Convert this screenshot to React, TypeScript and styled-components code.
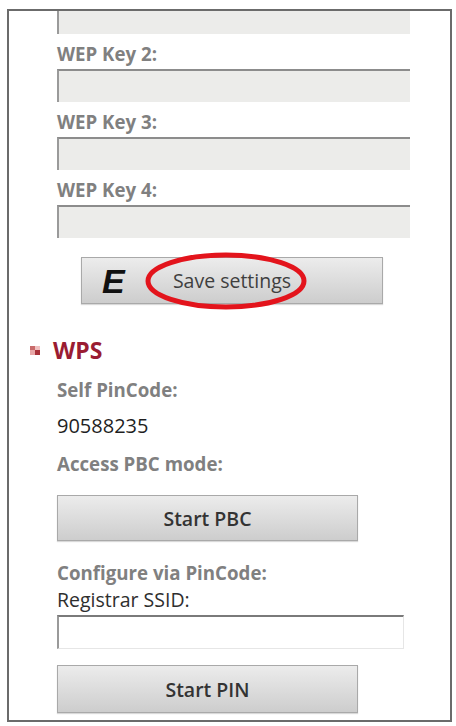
import React from "react";
import styled, { createGlobalStyle } from "styled-components";

const Global = createGlobalStyle`
  html, body { margin: 0; padding: 0; background: #ffffff; }
  body { font-family: "Open Sans", Roboto, "Liberation Sans", Arial, sans-serif; }
`;

const Frame = styled.div`
  box-sizing: border-box;
  margin: 9px 0 0 7px;
  width: 445px;
  height: 713px;
  border: 2px solid #6b6b6b;
  background: #ffffff;
  overflow: hidden;
`;

const Column = styled.div`
  display: flex;
  flex-direction: column;
  align-items: flex-start;
  margin-top: -10px;
  padding-left: 48px;
`;

const Field = styled.div<{ $white?: boolean; $width: number; $mt?: number }>`
  box-sizing: border-box;
  width: ${(p) => p.$width}px;
  height: ${(p) => (p.$white ? 34 : 33)}px;
  margin-top: ${(p) => p.$mt ?? 0}px;
  background: ${(p) => (p.$white ? "#ffffff" : "#ececea")};
  border-top: 2px solid ${(p) => (p.$white ? "#7a7a7a" : "#8c8c8c")};
  border-left: 2px solid #9a9a9a;
  border-right: ${(p) => (p.$white ? "1px solid #e6e6e6" : "none")};
  border-bottom: ${(p) => (p.$white ? "1px solid #e6e6e6" : "none")};
`;

const Label = styled.div<{ $mt: number; $mb?: number; $dark?: boolean }>`
  margin-top: ${(p) => p.$mt}px;
  margin-bottom: ${(p) => p.$mb ?? 0}px;
  font-size: ${(p) => (p.$dark ? 19.5 : 18.7)}px;
  line-height: 22px;
  font-weight: ${(p) => (p.$dark ? 400 : 700)};
  color: ${(p) => (p.$dark ? "#2e2e2e" : "#808080")};
`;

const Value = styled.div`
  margin-top: 13px;
  font-size: 20px;
  line-height: 24px;
  color: #1f1f1f;
`;

const Button = styled.div<{ $width: number; $height: number; $mt: number; $ml?: number }>`
  position: relative;
  box-sizing: border-box;
  width: ${(p) => p.$width}px;
  height: ${(p) => p.$height}px;
  margin-top: ${(p) => p.$mt}px;
  margin-left: ${(p) => p.$ml ?? 0}px;
  display: flex;
  align-items: center;
  justify-content: center;
  border: 1px solid #a9a9a9;
  background: linear-gradient(#ececec, #cdcdcd);
  box-shadow: 0 1px 1px rgba(0, 0, 0, 0.15);
  font-size: 19.5px;
  font-weight: 600;
  color: #333333;
`;

const SaveText = styled.span`
  font-weight: 400;
  color: #3f3f3f;
  font-size: 19.5px;
`;

const Mark = styled.span`
  position: absolute;
  left: 20px;
  top: 6px;
  font-family: "Liberation Sans", Arial, sans-serif;
  font-style: italic;
  font-weight: 700;
  font-size: 34px;
  line-height: 34px;
  color: #111111;
`;

const Ring = styled.svg`
  position: absolute;
  left: 63px;
  top: -6px;
  overflow: visible;
`;

const Heading = styled.div`
  display: flex;
  align-items: center;
  gap: 13px;
  margin-top: 34px;
  margin-left: -27px;
  font-size: 23px;
  line-height: 24px;
  font-weight: 700;
  color: #9a1c32;
`;

const Bullet = () => (
  <svg width="10" height="9" viewBox="0 0 10 9">
    <rect x="0" y="0" width="5" height="4" fill="#c86a6a" />
    <rect x="5" y="0" width="5" height="4" fill="#f0c0c0" />
    <rect x="0" y="4" width="5" height="5" fill="#e8a8a8" />
    <rect x="5" y="4" width="5" height="5" fill="#a8323a" />
  </svg>
);

export default function App() {
  return (
    <>
      <Global />
      <Frame>
        <Column>
          <Field $width={353} />
          <Label $mt={9} $mb={4}>WEP Key 2:</Label>
          <Field $width={353} />
          <Label $mt={9} $mb={4}>WEP Key 3:</Label>
          <Field $width={353} />
          <Label $mt={9} $mb={4}>WEP Key 4:</Label>
          <Field $width={353} />
          <Button $width={302} $height={47} $mt={19} $ml={24}>
            <Mark>E</Mark>
            <SaveText>Save settings</SaveText>
            <Ring width="162" height="58" viewBox="0 0 162 58">
              <ellipse cx="81" cy="29" rx="78" ry="26" fill="none" stroke="#e3141c" strokeWidth="5" />
            </Ring>
          </Button>
          <Heading>
            <Bullet />
            <span>WPS</span>
          </Heading>
          <Label $mt={17}>Self PinCode:</Label>
          <Value>90588235</Value>
          <Label $mt={15}>Access PBC mode:</Label>
          <Button $width={301} $height={46} $mt={20}>Start PBC</Button>
          <Label $mt={21}>Configure via PinCode:</Label>
          <Label $mt={5} $dark>Registrar SSID:</Label>
          <Field $white $width={347} $mt={4} />
          <Button $width={301} $height={48} $mt={16}>Start PIN</Button>
        </Column>
      </Frame>
    </>
  );
}
